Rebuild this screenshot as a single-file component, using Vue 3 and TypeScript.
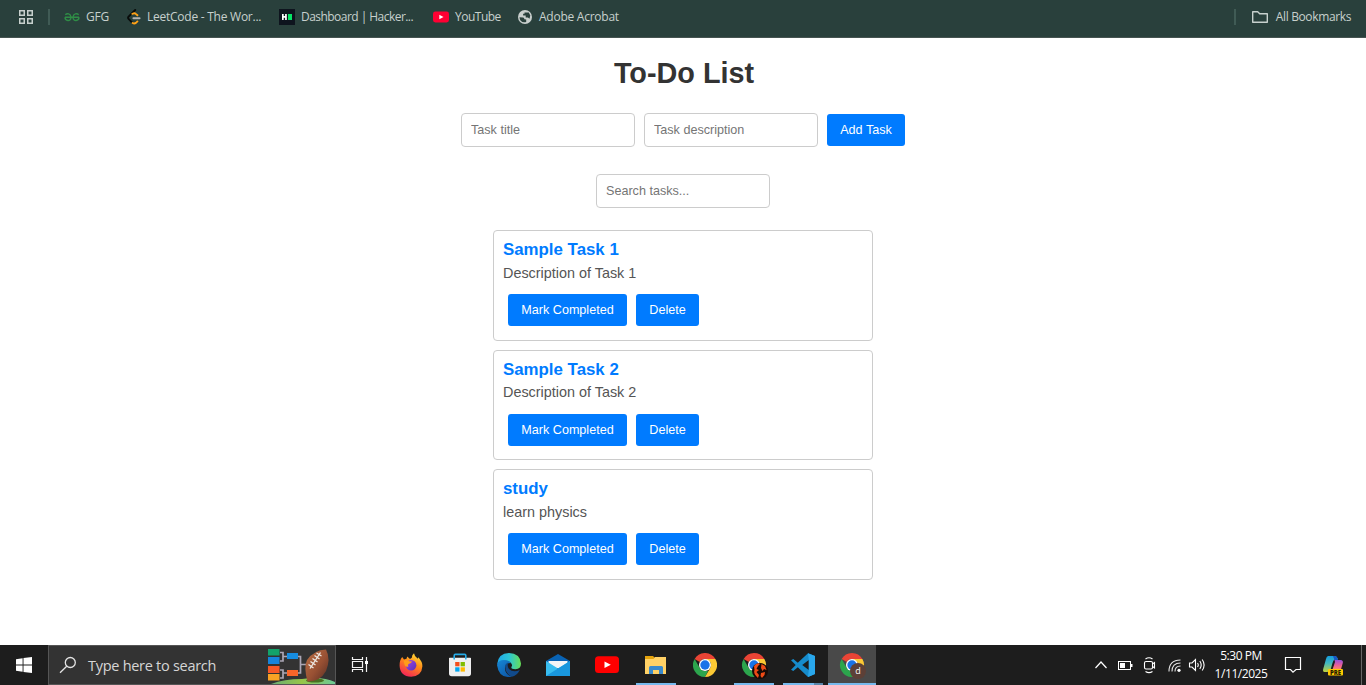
<script setup lang="ts">
import { ref, computed } from 'vue'

interface Task {
  id: number
  title: string
  description: string
  completed: boolean
}

const tasks = ref<Task[]>([
  { id: 1, title: 'Sample Task 1', description: 'Description of Task 1', completed: false },
  { id: 2, title: 'Sample Task 2', description: 'Description of Task 2', completed: false },
  { id: 3, title: 'study', description: 'learn physics', completed: false },
])

const title = ref('')
const description = ref('')
const search = ref('')

const visibleTasks = computed(() =>
  tasks.value.filter((t) => t.title.toLowerCase().includes(search.value.toLowerCase())),
)

function addTask(): void {
  if (!title.value) return
  tasks.value.push({ id: Date.now(), title: title.value, description: description.value, completed: false })
  title.value = ''
  description.value = ''
}

function toggle(task: Task): void {
  task.completed = !task.completed
}

function remove(id: number): void {
  tasks.value = tasks.value.filter((t) => t.id !== id)
}
</script>

<template>
  <div class="screen">
    <header class="bookmarks">
      <svg class="apps" width="16" height="16" viewBox="0 0 16 16" fill="none" stroke="#c7d0cd" stroke-width="1.5">
        <rect x="1.75" y="1.75" width="4.5" height="4.5" /><rect x="9.75" y="1.75" width="4.5" height="4.5" />
        <rect x="1.75" y="9.75" width="4.5" height="4.5" /><rect x="9.75" y="9.75" width="4.5" height="4.5" />
      </svg>
      <i class="divider"></i>
      <div class="bookmark gfg">
        <svg width="16" height="16" viewBox="0 0 16 16" fill="none" stroke="#2f8d46" stroke-width="1.4">
          <path d="M1 8.3H15M1.3 5.7C3 4 6.6 4.4 6.9 7.7C7.2 10.6 5.5 11.6 3.9 11.5C2 11.4 1 10 1 8.3M14.7 5.7C13 4 9.4 4.4 9.1 7.7C8.8 10.6 10.5 11.6 12.1 11.5C14 11.4 15 10 15 8.3" />
        </svg>
        <span>GFG</span>
      </div>
      <div class="bookmark leet">
        <svg width="16" height="16" viewBox="0 0 16 16" fill="none" stroke-linecap="round" stroke-width="1.9">
          <path d="M9.2 1L2.6 7.6Q1.6 8.7 2.6 9.9L5.7 13.2" stroke="#080b0a" />
          <path d="M6.4 4.8L7.6 4.3Q8.8 3.9 9.8 4.9L11.4 6.3M6.6 14Q8.4 15.2 10 13.8L11.4 12.4" stroke="#ffa116" />
          <path d="M7.4 9.2H13.6" stroke="#b3b3b3" />
        </svg>
        <span>LeetCode - The Wor...</span>
      </div>
      <div class="bookmark hacker">
        <svg width="16" height="16" viewBox="0 0 16 16">
          <rect width="16" height="16" fill="#0e141e" />
          <path d="M3 5H4.7V7H6.1V5H7.8V11H6.1V8.8H4.7V11H3Z" fill="#fff" />
          <rect x="9" y="5" width="4" height="6" fill="#05e565" />
        </svg>
        <span>Dashboard | Hacker...</span>
      </div>
      <div class="bookmark tube">
        <svg width="16" height="16" viewBox="0 0 16 16">
          <rect y="2.5" width="16" height="11" rx="2.4" fill="#ff0033" /><path d="M6.3 5.8L10.5 8L6.3 10.2Z" fill="#fff" />
        </svg>
        <span>YouTube</span>
      </div>
      <div class="bookmark adobe">
        <svg width="16" height="16" viewBox="0 0 16 16">
          <circle cx="8" cy="8" r="7" fill="#c8cfcd" />
          <path d="M2.5 8.2L6.1 8.5Q7.3 8.8 7.4 10.2L9.2 10.6V12.9Q6 14.2 3.7 11.8Q2.6 10.3 2.5 8.2M7.5 3.6H11.8L13.3 6.6L12.5 9.8L10.9 8.4H8.7V6.6H6.1V4.8H7.5Z" fill="#29403c" />
        </svg>
        <span>Adobe Acrobat</span>
      </div>
      <div class="all-bookmarks">
        <i class="divider"></i>
        <svg width="18" height="16" viewBox="0 0 18 16" fill="none" stroke="#c7d0cd" stroke-width="1.4" stroke-linejoin="round">
          <path d="M1.7 2.7H6.7L8.7 4.7H16.3V13.3H1.7Z" />
        </svg>
        <span>All Bookmarks</span>
      </div>
    </header>

    <main class="page">
      <h1>To-Do List</h1>
      <form class="add-form" @submit.prevent="addTask">
        <input v-model="title" type="text" placeholder="Task title" />
        <input v-model="description" type="text" placeholder="Task description" />
        <button type="submit">Add Task</button>
      </form>
      <input v-model="search" class="search" type="text" placeholder="Search tasks..." />
      <ul class="tasks">
        <li v-for="task in visibleTasks" :key="task.id" :class="{ done: task.completed }">
          <h3>{{ task.title }}</h3>
          <p>{{ task.description }}</p>
          <div class="actions">
            <button class="complete" @click="toggle(task)">Mark Completed</button>
            <button class="delete" @click="remove(task.id)">Delete</button>
          </div>
        </li>
      </ul>
    </main>

    <footer class="taskbar">
      <div class="start">
        <svg width="16" height="16" viewBox="0 0 16 16" fill="#fff">
          <path d="M0 2.2L6.6 1.2V7.5H0ZM7.5 1.1L16 0V7.5H7.5ZM0 8.5H6.6V14.8L0 13.8ZM7.5 8.5H16V16L7.5 14.9Z" />
        </svg>
      </div>
      <div class="taskbar-search">
        <svg class="lens" width="18" height="18" viewBox="0 0 18 18" fill="none" stroke="#e4e4e4" stroke-width="1.3">
          <circle cx="11.3" cy="6.5" r="5" /><path d="M7.7 10.2L1 16.8" />
        </svg>
        <span>Type here to search</span>
        <svg class="game" width="72" height="38" viewBox="0 0 72 38">
          <defs>
            <linearGradient id="ball" x1="0" y1="0" x2="1" y2="1">
              <stop offset="0" stop-color="#bb7046" /><stop offset=".55" stop-color="#985033" /><stop offset="1" stop-color="#552d23" />
            </linearGradient>
            <linearGradient id="hill"><stop offset="0" stop-color="#69ac77" /><stop offset=".48" stop-color="#96c548" /><stop offset="1" stop-color="#6cc995" /></linearGradient>
          </defs>
          <path d="M5 38Q18 33 36 33Q56 30 69 36V38Z" fill="url(#hill)" />
          <path d="M14 6.5H17V15H14M17 10.5H21M14 24H17V32H14M17 27H21M32 10.5H34.5V27H32M34.5 18.5H40" fill="none" stroke="#aba6b5" stroke-width="1.7" />
          <rect x="2" y="3" width="11.5" height="6.5" fill="#13a36a" /><rect x="2" y="11" width="11.5" height="7" fill="#1684dc" />
          <rect x="21" y="7" width="11" height="6" fill="#168cdf" /><rect x="2" y="20" width="11.5" height="7" fill="#f75827" />
          <rect x="2" y="28" width="11.5" height="6.5" fill="#f9a224" /><rect x="21" y="24" width="11" height="6" fill="#f86529" />
          <ellipse cx="49" cy="34.5" rx="9" ry="2" fill="#496f22" />
          <path d="M60 3.5Q48 4 41 14Q37.5 21 41.5 35.5Q54 36 60 25Q65 13 60 3.5Z" fill="url(#ball)" />
          <path d="M44 22.5L54.5 6.5M42.5 18.5L47.5 22M44.5 15.5L49.5 19M46.5 12.5L51.5 16M48.5 9.5L53.5 13M50.5 7L55.5 10" stroke="#eee9e4" stroke-width="1.3" />
        </svg>
      </div>
      <div class="task-view">
        <svg width="18" height="18" viewBox="0 0 18 18" fill="none" stroke="#f2f2f2" stroke-width="1.2">
          <path d="M1.5 1V3.5H11.5V1M1.5 16V13.5H11.5V16M1.5 5.5H11.5V11.5H1.5ZM15.5 1V16" /><rect x="14" y="5" width="3" height="3" fill="#fff" stroke="none" />
        </svg>
      </div>

      <nav class="apps-list">
        <div class="app">
          <svg width="24" height="24" viewBox="0 0 24 24">
            <defs>
              <linearGradient id="fox" x1=".8" y1="0" x2=".3" y2="1"><stop offset="0" stop-color="#ffe43b" /><stop offset=".45" stop-color="#ff8a18" /><stop offset="1" stop-color="#f42259" /></linearGradient>
              <linearGradient id="globe" x1="0" y1="0" x2="1" y2="1"><stop offset="0" stop-color="#a144ef" /><stop offset="1" stop-color="#5531b5" /></linearGradient>
            </defs>
            <path d="M3.2 4L5 6.6L7.5 5.7L8.2 3.6L11 6L12.8 4.8Q12.8 2 15 .3Q15.3 3.4 18.8 5.8L19.2 4.3Q23.5 8.7 23.4 13.2Q22.8 23 12.2 23.7Q1 23.2.6 12.7Q.4 7.4 3.2 4Z" fill="url(#fox)" />
            <circle cx="12.1" cy="12.2" r="5.3" fill="url(#globe)" />
            <path d="M4.6 7.6Q7.1 6.6 10.2 8.2L13.2 8.4Q12.3 10.2 9.5 11Q8.3 12.1 9.5 13.5Q6.4 14.3 5.6 12Z" fill="#ff9d19" />
          </svg>
        </div>
        <div class="app">
          <svg width="24" height="24" viewBox="0 0 24 24">
            <path d="M1 5.6Q.7 4.8 1.8 4.8H22.2Q23.3 4.8 23 5.6V20.5Q23 23.2 20.2 23.2H3.8Q1 23.2 1 20.5Z" fill="#eeeeef" />
            <path d="M6.2 6.6V2.5Q6.2 1.4 7.4 1.4H16.6Q17.8 1.4 17.8 2.5V6.6" fill="none" stroke="#26aae5" stroke-width="1.6" />
            <rect x="7.2" y="9" width="4.3" height="4.3" fill="#f34f1c" /><rect x="12.6" y="9" width="4.3" height="4.3" fill="#7fbc00" />
            <rect x="7.2" y="14.3" width="4.3" height="4.3" fill="#01a6f0" /><rect x="12.6" y="14.3" width="4.3" height="4.3" fill="#ffba01" />
          </svg>
        </div>
        <div class="app">
          <svg width="24" height="24" viewBox="0 0 24 24">
            <defs>
              <linearGradient id="edge1"><stop offset="0" stop-color="#1fa8e8" /><stop offset=".5" stop-color="#2cc5d4" /><stop offset="1" stop-color="#67df55" /></linearGradient>
              <linearGradient id="edge2" x1="0" y1="0" x2=".7" y2="1"><stop offset="0" stop-color="#1688d6" /><stop offset="1" stop-color="#0e5aa9" /></linearGradient>
            </defs>
            <path d="M.2 11Q1.2.3 12 0Q23 .3 24 10.5Q24 16 18.4 16.3Q13.5 16.2 14.5 13.8Q16 11.8 13.6 9.5Q8 5.4.2 11Z" fill="url(#edge1)" />
            <path d="M0 12Q1 7 7 7Q12 7 14.2 10.2Q8.8 9.5 8 14.8Q7.5 21 14.7 23.7Q2 26 0 12Z" fill="url(#edge2)" />
            <path d="M8.2 14Q7.7 10.7 11.3 9.5Q9.8 13 12 16Q16.2 20 22.8 17Q20 22.8 14.7 23.7Q8.5 20.5 8.2 14Z" fill="#114a8b" />
          </svg>
        </div>
        <div class="app">
          <svg width="24" height="24" viewBox="0 0 24 24">
            <path d="M0 8L12 1L24 8V14H0Z" fill="#0963b4" /><path d="M2.5 8H21.5V15H2.5Z" fill="#f4f5f6" />
            <path d="M0 8L12 15.4L24 8V23H0Z" fill="#39bdef" /><path d="M0 23L24 8V23Z" fill="#1997dd" />
          </svg>
        </div>
        <div class="app">
          <svg width="24" height="24" viewBox="0 0 24 24"><rect y="3.3" width="24" height="16.8" rx="3.5" fill="#ff0000" /><path d="M9.5 8.6L15.8 11.8L9.5 15Z" fill="#fff" /></svg>
        </div>
        <div class="app open">
          <svg width="24" height="24" viewBox="0 0 24 24"><path d="M1 3H9L11 5V9H1Z" fill="#e5a30d" /><path d="M1 6H9.5L11 4H22V21H1Z" fill="#ffd166" /><path d="M5 21V14.5Q5 13 6.5 13H17.5Q19 13 19 14.5V21H15V17H9V21Z" fill="#3989cc" /></svg>
        </div>
        <div class="app">
          <svg width="24" height="24" viewBox="0 0 48 48"><path d="M3.2 12A24 24 0 0 1 44.8 12H24Q16 12 13.6 18Z" fill="#e94435" /><path d="M3.2 12L13.6 30Q17 36 24 36H30L24 48A24 24 0 0 1 3.2 12Z" fill="#2ca54d" /><path d="M44.8 12A24 24 0 0 1 24 48L34.4 30Q38 23 34.4 18L24 12Z" fill="#fcc934" /><circle cx="24" cy="24" r="12" fill="#fff" /><circle cx="24" cy="24" r="9.4" fill="#1a73e8" /></svg>
        </div>
        <div class="app open">
          <svg width="28" height="28" viewBox="0 0 28 28">
            <g transform="translate(2 2) scale(.5)"><path d="M3.2 12A24 24 0 0 1 44.8 12H24Q16 12 13.6 18Z" fill="#e94435" /><path d="M3.2 12L13.6 30Q17 36 24 36H30L24 48A24 24 0 0 1 3.2 12Z" fill="#2ca54d" /><path d="M44.8 12A24 24 0 0 1 24 48L34.4 30Q38 23 34.4 18L24 12Z" fill="#fcc934" /><circle cx="24" cy="24" r="12" fill="#fff" /><circle cx="24" cy="24" r="9.4" fill="#1a73e8" /></g>
            <circle cx="20" cy="20" r="8" fill="#160b07" /><path d="M14 15Q17 11 20 13L18 15L16.5 18L19 19L16.5 21L19 24L18 27Q13 23 14.5 19ZM21.5 13L25 15L26.5 19L24 18L22.5 20L21 17ZM21 22L25 21L24.5 24L22 27L20.5 25Z" fill="#ef4b16" />
          </svg>
        </div>
        <div class="app open grouped">
          <svg width="24" height="24" viewBox="0 0 24 24"><path d="M17 .2L24 3V21L17 24L6.8 14.3L2.3 18L0 16.8L4.7 12L0 7.2L2.3 6L6.8 9.7ZM17.8 7L11.2 12L17.8 17Z" fill="#168bcb" /><path d="M17 .2L24 3V21L17 24L17.8 17V7Z" fill="#29a7ec" /></svg>
        </div>
        <div class="app open active">
          <svg width="28" height="28" viewBox="0 0 28 28">
            <g transform="translate(2 2) scale(.5)"><path d="M3.2 12A24 24 0 0 1 44.8 12H24Q16 12 13.6 18Z" fill="#e94435" /><path d="M3.2 12L13.6 30Q17 36 24 36H30L24 48A24 24 0 0 1 3.2 12Z" fill="#2ca54d" /><path d="M44.8 12A24 24 0 0 1 24 48L34.4 30Q38 23 34.4 18L24 12Z" fill="#fcc934" /><circle cx="24" cy="24" r="12" fill="#fff" /><circle cx="24" cy="24" r="9.4" fill="#1a73e8" /></g>
            <circle cx="20" cy="20" r="8" fill="#5d4037" /><text x="20" y="23.2" text-anchor="middle" font-family="Open Sans, sans-serif" font-size="9" fill="#fff">d</text>
          </svg>
        </div>
      </nav>

      <div class="tray">
        <svg class="chevron" width="14" height="40" viewBox="0 0 14 40" fill="none" stroke="#fff" stroke-width="1.2"><path d="M1.5 23L7 17L12.5 23" /></svg>
        <svg class="battery" width="16" height="40" viewBox="0 0 16 40"><rect x=".5" y="16.5" width="12" height="8" fill="none" stroke="#fff" /><path d="M13 19H14.5V22H13ZM2 18H7V23H2Z" fill="#fff" /></svg>
        <svg width="16" height="40" viewBox="0 0 16 40" fill="none" stroke="#fff" stroke-width="1.1"><rect x="2.5" y="16.5" width="8" height="7.5" rx="1.5" /><path d="M10.5 19L12.5 17.5V23L10.5 21.5M3.5 14Q7 11.4 10.5 14M3.5 26.5Q7 28.7 10.5 26.5" /></svg>
        <svg class="wifi" width="16" height="40" viewBox="0 0 16 40" fill="none" stroke="#e4e4e4" stroke-width="1.1"><path d="M2 26.5Q2 15 13.5 15M5 26.5Q5 18 13.5 18M8 26.5Q8 21 13.5 21" /><circle cx="12" cy="25.3" r="1.6" fill="#fff" stroke="none" /></svg>
        <svg class="volume" width="18" height="40" viewBox="0 0 18 40" fill="none" stroke="#fff" stroke-width="1.1"><path d="M1.5 18H4L7.5 14.5V25.5L4 22H1.5ZM9.5 18Q11 20 9.5 22M11.8 16Q14.6 20 11.8 24M14.2 14.5Q18 20 14.2 25.5" /></svg>
        <div class="clock"><span class="time">5:30 PM</span><span class="date">1/11/2025</span></div>
        <svg width="18" height="40" viewBox="0 0 18 40" fill="none" stroke="#fff" stroke-width="1.2"><path d="M1.5 12.5H16.5V24.5H12L9 27.2L6.5 24.5H1.5Z" /></svg>
        <svg class="copilot" width="22" height="40" viewBox="0 0 22 40">
          <defs><linearGradient id="copA" x1="0" y1="0" x2="0" y2="1"><stop offset="0" stop-color="#159ddd" /><stop offset=".45" stop-color="#42b8bf" /><stop offset="1" stop-color="#c3d33a" /></linearGradient><linearGradient id="copB" x1="0" y1="0" x2="0" y2="1"><stop offset="0" stop-color="#9752dc" /><stop offset=".5" stop-color="#ed6095" /><stop offset="1" stop-color="#ff9d50" /></linearGradient></defs>
          <path d="M6 11H13Q15 11 16 14.5H12.5Q11.3 15 10.5 18L8.5 25Q8 27 5 27H2.5Q.5 27 1.2 24L4 14Q4.5 11.3 6 11Z" fill="url(#copA)" />
          <path d="M12.5 15H18.5Q21.5 15.3 20.8 18L18.5 26H10L13 17Z" fill="url(#copB)" /><path d="M11 11H13Q15 11 16 15H12.5Z" fill="#1956c5" />
          <rect x="6" y="24" width="15" height="6.5" rx="1" fill="#ffc800" /><text x="13.5" y="29.5" text-anchor="middle" font-family="Open Sans, sans-serif" font-weight="800" font-size="6" fill="#261b00">PRE</text>
        </svg>
        <i class="desktop-edge"></i>
      </div>
    </footer>
  </div>
</template>

<style>
body { margin: 0; overflow: hidden; }
</style>

<style scoped>
* { box-sizing: border-box; }
svg { display: block; flex: none; }
.screen { width: 1366px; height: 685px; display: flex; flex-direction: column; background: #fff; font-family: "Liberation Sans", Arial, sans-serif; }
.bookmarks { height: 38px; flex: none; display: flex; align-items: flex-start; padding: 9px 15px 0 18px; background: #29403c; border-bottom: 1px solid #465451; color: #c7d0cd; font: 12px/16px "Open Sans", sans-serif; white-space: nowrap; }
.divider { width: 2px; height: 16px; background: #405b55; }
.apps + .divider { margin: 0 14px; }
.bookmark { display: flex; gap: 6px; }
.gfg { width: 62px; } .leet { width: 153px; } .hacker { width: 154px; } .tube { width: 84px; }
.bookmark span { letter-spacing: -.25px; }
.bookmark.leet { gap: 5px; }
.bookmark.hacker span { letter-spacing: -.54px; }
.bookmark.tube span { letter-spacing: -.5px; }
.all-bookmarks { margin-left: auto; display: flex; }
.all-bookmarks span { letter-spacing: -.37px; }
.all-bookmarks svg { margin: 0 7px 0 15px; }
.page { flex: 1; display: flex; flex-direction: column; align-items: center; }
h1 { margin: 19px 0 23px; color: #333; font-size: 28.8px; line-height: 33px; padding-left: 2px; }
input { width: 174px; height: 34px; padding: 0 9px 1px; border: 1px solid #ccc; border-radius: 4px; font: 12.6px "Liberation Sans", Arial, sans-serif; color: #333; background: #fff; outline: none; }
input::placeholder { color: #757575; opacity: 1; }
.add-form { display: flex; gap: 9px; align-items: center; }
button { height: 32px; padding: 0; border: 0; border-radius: 3px; background: #007bff; color: #fff; font: 12.6px "Liberation Sans", Arial, sans-serif; }
.add-form button { width: 78px; }
.search { margin-top: 27px; }
.tasks { list-style: none; margin: 22px 0 0; padding: 0; width: 380px; display: flex; flex-direction: column; gap: 9px; }
li { height: 110.5px; border: 1px solid #ccc; border-radius: 4px; padding: 9px; }
h3 { margin: 0; color: #007bff; font-size: 16.85px; line-height: 20px; }
p { margin: 3.8px 0 0; color: #555; font-size: 14.4px; line-height: 18px; }
.actions { margin: 12.4px 0 0 5px; display: flex; gap: 9px; }
.complete { width: 119px; } .delete { width: 63px; }
.done h3 { text-decoration: line-through; }
.taskbar { height: 40px; flex: none; display: flex; background: #1d1d1d; color: #fff; font-family: "Open Sans", sans-serif; }
.start { width: 48px; display: flex; align-items: center; justify-content: center; }
.taskbar-search { width: 288px; display: flex; align-items: center; border: 1px solid #555; background: #333; color: #d6d6d6; font-size: 14.5px; letter-spacing: -.28px; white-space: nowrap; }
.lens { margin: 0 11px 0 10px; }
.game { margin-left: auto; margin-right: -3px; }
.task-view { width: 48px; display: flex; align-items: center; justify-content: center; }
.apps-list { display: flex; gap: 1px; margin-left: 3px; }
.app { width: 48px; display: flex; align-items: center; justify-content: center; }
.app.open { background: linear-gradient(#76b9ed, #76b9ed) 4px 38px / 40px 2px no-repeat; }
.app.grouped { background: linear-gradient(90deg, #76b9ed 31px, #5a86aa 31px) 4px 38px / 40px 2px no-repeat; }
.app.active { background: linear-gradient(#76b9ed, #76b9ed) 0 38px / 48px 2px no-repeat #494949; }
.tray { margin-left: auto; display: flex; }
.tray > svg { margin-right: 9px; }
.tray > .chevron { margin-right: 10px; }
.tray > .battery { margin-right: 8px; }
.tray > .wifi { margin-right: 5px; }
.tray > .volume { margin-right: 3px; }
.clock { width: 64px; display: flex; flex-direction: column; align-items: center; padding-top: 2px; margin: 0 11px 0 0; font-size: 12px; line-height: 18px; white-space: nowrap; }
.time { letter-spacing: -.45px; }
.date { letter-spacing: -.45px; }
.tray > .copilot { margin: 0 17px 0 11px; }
.desktop-edge { width: 5px; border-left: 1px solid #666; }
</style>
